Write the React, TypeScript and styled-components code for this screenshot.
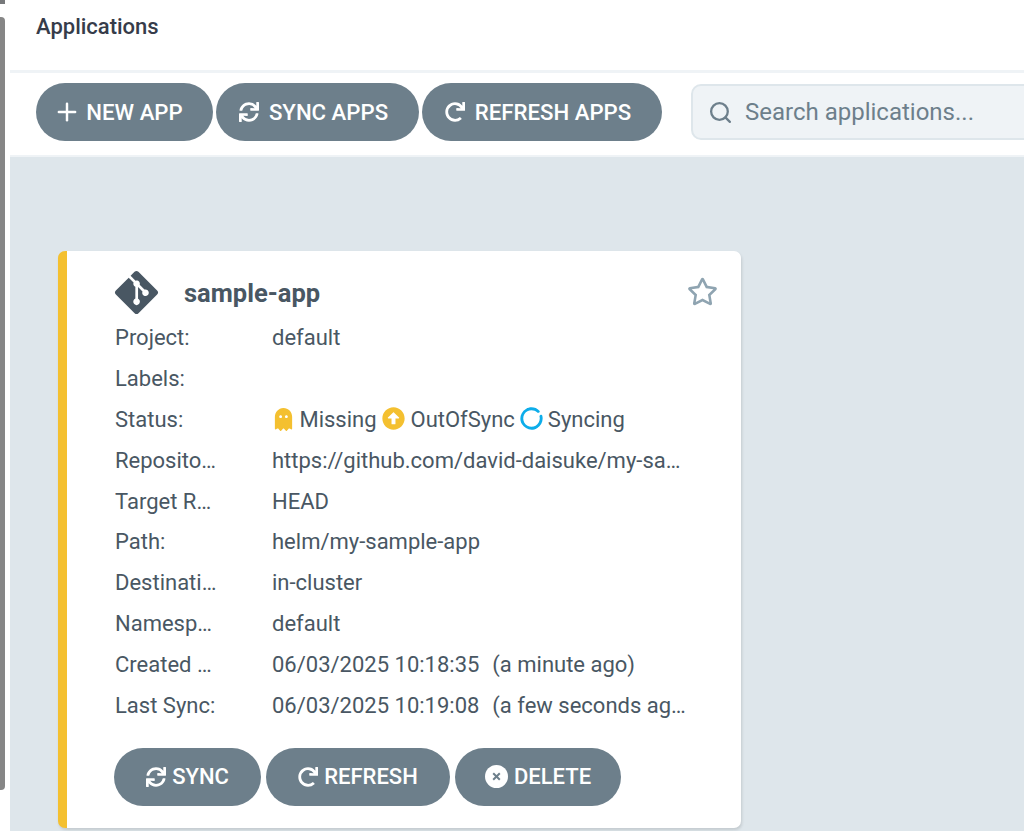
import React from 'react';
import styled, { createGlobalStyle } from 'styled-components';
import {
  FaArrowAltCircleUp,
  FaCircleNotch,
  FaGhost,
  FaGitAlt,
  FaRedo,
  FaRegStar,
  FaSync,
} from 'react-icons/fa';
import { Plus, Search as SearchIcon } from 'lucide-react';

const GlobalStyle = createGlobalStyle`
  html, body {
    margin: 0;
    padding: 0;
    background: #fff;
    overflow: hidden;
  }
  * {
    box-sizing: border-box;
  }
`;

const Ghost = styled(FaGhost)`
  margin-right: -1px;
  color: #f4c030;
  vertical-align: -4px !important;
`;

const SyncRing = styled(FaCircleNotch)`
  margin-right: -1px;
  color: #0dadea;
  transform: rotate(60deg);
`;

const Ago = styled.span`
  margin-left: 2px;
`;

const rows: { label: string; value: React.ReactNode }[] = [
  { label: 'Project:', value: 'default' },
  { label: 'Labels:', value: '' },
  {
    label: 'Status:',
    value: (
      <>
        <Ghost size={23} /> Missing <FaArrowAltCircleUp color="#f4c030" size={23} /> OutOfSync{' '}
        <SyncRing size={23} /> Syncing
      </>
    ),
  },
  { label: 'Repository:', value: 'https://github.com/david-daisuke/my-sample-app.git' },
  { label: 'Target Revision:', value: 'HEAD' },
  { label: 'Path:', value: 'helm/my-sample-app' },
  { label: 'Destination:', value: 'in-cluster' },
  { label: 'Namespace:', value: 'default' },
  {
    label: 'Created At:',
    value: (
      <>
        06/03/2025 10:18:35 {' '}
        <Ago>(a minute ago)</Ago>
      </>
    ),
  },
  {
    label: 'Last Sync:',
    value: (
      <>
        06/03/2025 10:19:08 {' '}
        <Ago>(a few seconds ago)</Ago>
      </>
    ),
  },
];

const DeleteIcon = () => (
  <svg width="23" height="23" viewBox="0 0 23 23">
    <circle cx="11.5" cy="11.5" r="11.5" fill="#fff" />
    <path d="M8.2 8.2l6.6 6.6M14.8 8.2l-6.6 6.6" stroke="#6d7f8b" strokeWidth="2" />
  </svg>
);

const App = () => (
  <Page>
    <GlobalStyle />
    <Gutter>
      <GutterCap />
      <GutterThumb />
    </Gutter>
    <Main>
      <TitleBar>Applications</TitleBar>
      <Toolbar>
        <ToolButton $width={177}>
          <PlusIcon size={28} strokeWidth={2.1} /> NEW APP
        </ToolButton>
        <ToolButton $width={203}>
          <FaSync size={20} /> SYNC APPS
        </ToolButton>
        <ToolButton $width={240}>
          <FaRedo size={20} /> REFRESH APPS
        </ToolButton>
        <Search>
          <SearchIcon size={25} color="#6d7f8b" strokeWidth={2.2} />
          <SearchText>Search applications...</SearchText>
        </Search>
      </Toolbar>
      <Content>
        <Card>
          <CardHead>
            <GitLogo size={49} color="#495763" />
            <AppName>sample-app</AppName>
            <Star size={31} color="#8fa4b1" />
          </CardHead>
          {rows.map((row) => (
            <Row key={row.label}>
              <Label>{row.label}</Label>
              <Value>{row.value}</Value>
            </Row>
          ))}
          <CardActions>
            <CardButton $width={147}>
              <FaSync size={20} /> SYNC
            </CardButton>
            <CardButton $width={184}>
              <FaRedo size={20} /> REFRESH
            </CardButton>
            <CardButton $width={166}>
              <DeleteIcon /> DELETE
            </CardButton>
          </CardActions>
        </Card>
      </Content>
    </Main>
  </Page>
);

const Page = styled.div`
  display: flex;
  width: 1024px;
  height: 831px;
  overflow: hidden;
  background: #fff;
  font-family: Roboto, 'Liberation Sans', sans-serif;
`;

const Gutter = styled.div`
  flex: 0 0 10px;
  display: flex;
  flex-direction: column;
`;

const GutterCap = styled.div`
  width: 5px;
  height: 4px;
  background: #77797b;
`;

const GutterThumb = styled.div`
  width: 5px;
  height: 773px;
  margin-top: 13px;
  background: #868686;
  border-radius: 0 4px 4px 0;
`;

const Main = styled.div`
  flex: 1;
  min-width: 0;
  display: flex;
  flex-direction: column;
`;

const TitleBar = styled.div`
  height: 73px;
  padding: 15px 0 0 26px;
  border-bottom: 3px solid #eff3f6;
  color: #363c4a;
  font-size: 22px;
  font-weight: 500;
  line-height: 24px;
`;

const Toolbar = styled.div`
  height: 84px;
  padding: 10px 0 0 26px;
  border-bottom: 2px solid #eff3f6;
  display: flex;
  align-items: flex-start;
  gap: 3px;
  overflow: hidden;
`;

const ToolButton = styled.button<{ $width: number }>`
  flex: 0 0 ${(p) => p.$width}px;
  height: 58px;
  padding: 0 8px 0 0;
  border: 0;
  border-radius: 29px;
  background: #6d7f8b;
  color: #fff;
  font-family: inherit;
  font-size: 22.2px;
  font-weight: 500;
  display: flex;
  align-items: center;
  justify-content: center;
  gap: 10px;
  white-space: nowrap;
`;

const PlusIcon = styled(Plus)`
  margin: 0 -5px;
`;

const Search = styled.div`
  flex: 0 0 500px;
  height: 56px;
  margin: 1px 0 0 26px;
  padding-left: 15px;
  border: 2px solid #dee6eb;
  border-radius: 10px;
  background: #eff3f6;
  display: flex;
  align-items: center;
  gap: 12px;
`;

const SearchText = styled.span`
  color: #6d7f8b;
  font-size: 24px;
`;

const Content = styled.div`
  flex: 1;
  padding: 94px 0 0 48px;
  background: #dee6eb;
`;

const Card = styled.div`
  width: 683px;
  height: 577px;
  padding: 17px 0 0 48px;
  border-left: 9px solid #f4c030;
  border-radius: 7px;
  background: #fff;
  box-shadow: 1px 2px 3px rgba(0, 0, 0, 0.12);
`;

const CardHead = styled.div`
  height: 49px;
  padding-right: 23px;
  display: flex;
  align-items: center;
`;

const GitLogo = styled(FaGitAlt)`
  margin-left: -3px;
`;

const AppName = styled.div`
  flex: 1;
  margin-left: 23px;
  color: #495763;
  font-size: 25.5px;
  font-weight: 700;
`;

const Star = styled(FaRegStar)`
  margin-bottom: 3px;
`;

const Row = styled.div`
  height: 40.9px;
  display: flex;
  align-items: center;
  color: #495763;
  font-size: 22px;
`;

const Label = styled.div`
  flex: 0 0 157px;
  padding-right: 54px;
  overflow: hidden;
  white-space: nowrap;
  text-overflow: ellipsis;
`;

const Value = styled.div`
  width: 416px;
  overflow: hidden;
  white-space: pre;
  text-overflow: ellipsis;

  svg {
    vertical-align: -3px;
  }
`;

const CardActions = styled.div`
  margin-top: 22px;
  margin-left: -1px;
  display: flex;
  gap: 5px;
`;

const CardButton = styled.button<{ $width: number }>`
  width: ${(p) => p.$width}px;
  height: 58px;
  border: 0;
  border-radius: 29px;
  background: #6d7f8b;
  color: #fff;
  font-family: inherit;
  font-size: 22px;
  font-weight: 500;
  display: flex;
  align-items: center;
  justify-content: center;
  gap: 6px;
`;

export default App;
